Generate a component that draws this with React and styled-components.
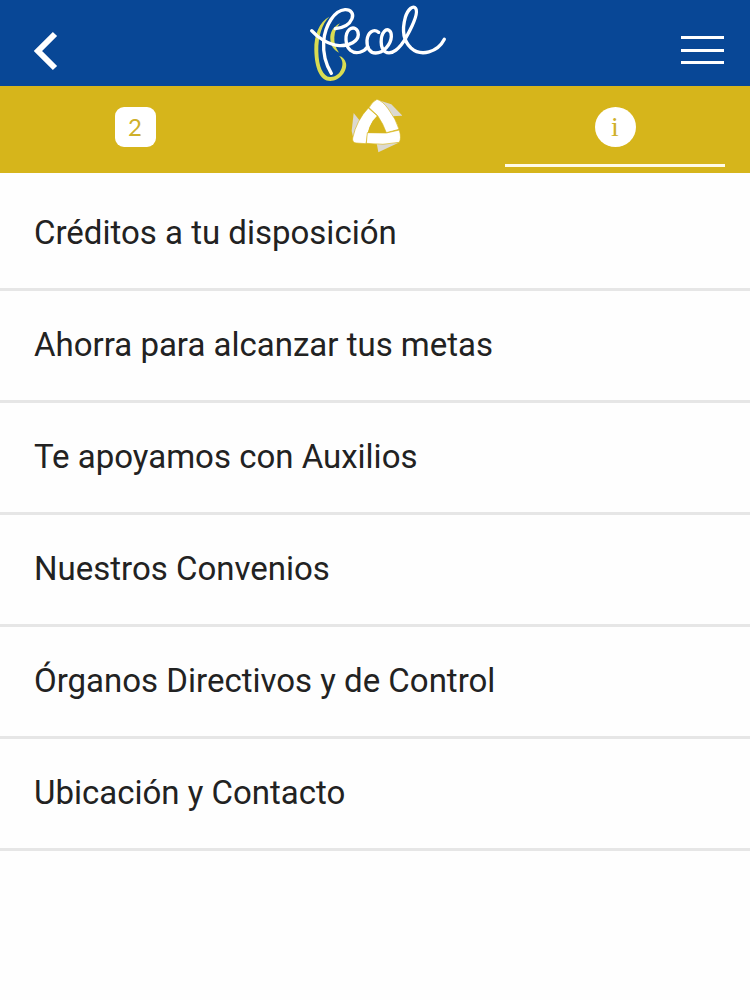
import React, { useState } from 'react';
import styled, { createGlobalStyle } from 'styled-components';

const GlobalStyle = createGlobalStyle`
  * {
    box-sizing: border-box;
  }

  body {
    margin: 0;
    background: #fefefe;
    font-family: Roboto, "Liberation Sans", sans-serif;
  }
`;

const Header = styled.header`
  display: grid;
  grid-template-columns: 1fr auto 1fr;
  align-items: center;
  height: 86px;
  padding: 0 24px;
  background: #084796;
`;

const IconButton = styled.button`
  display: flex;
  justify-self: ${({ $align }) => $align};
  padding: 14px 0 0;
  border: none;
  background: none;
  cursor: pointer;

  svg {
    display: block;
  }
`;

const LogoLink = styled.a`
  display: block;
  height: 86px;

  svg {
    display: block;
  }
`;

const Tabs = styled.nav`
  display: grid;
  grid-template-columns: repeat(3, 1fr);
  gap: 20px;
  height: 87px;
  padding: 0 25px 6px;
  background: #d6b51b;
`;

const Tab = styled.button`
  display: flex;
  align-items: center;
  justify-content: center;
  padding: 3px 0 0;
  border: none;
  border-bottom: 3px solid ${({ $active }) => ($active ? '#fffbe6' : 'transparent')};
  background: none;
  cursor: pointer;
`;

const Badge = styled.span`
  display: flex;
  align-items: center;
  justify-content: center;
  width: 41px;
  height: 40px;
  border-radius: ${({ $round }) => ($round ? '50%' : '9px')};
  background: #fff;
  color: #cfb02a;
  font-family: ${({ $round }) => ($round ? '"Liberation Serif", serif' : 'Lato, sans-serif')};
  font-size: ${({ $round }) => ($round ? '28px' : '24px')};
  font-weight: 400;
  line-height: 1;
`;

const OptionList = styled.ul`
  margin: 0;
  padding: 6px 0 0;
  list-style: none;
`;

const Option = styled.li`
  border-bottom: 3px solid #e6e6e6;
`;

const OptionLink = styled.a`
  display: flex;
  align-items: center;
  height: 109px;
  padding: 0 34px 2px;
  color: #222;
  font-size: 33px;
  line-height: 40px;
  text-decoration: none;
`;

const options = [
  { id: 'creditos', label: 'Créditos a tu disposición' },
  { id: 'ahorro', label: 'Ahorra para alcanzar tus metas' },
  { id: 'auxilios', label: 'Te apoyamos con Auxilios' },
  { id: 'convenios', label: 'Nuestros Convenios' },
  { id: 'organos', label: 'Órganos Directivos y de Control' },
  { id: 'contacto', label: 'Ubicación y Contacto' }
];

const BackIcon = () => (
  <svg width="42" height="42" viewBox="0 0 42 42" fill="none" stroke="#fff" strokeWidth="6">
    <path d="M31 5 L14 22 L31 39" />
  </svg>
);

const MenuIcon = () => (
  <svg width="46" height="34" viewBox="0 0 46 34" fill="#fff">
    <rect x="1" y="3" width="43" height="3" />
    <rect x="1" y="16" width="43" height="3" />
    <rect x="1" y="28" width="43" height="3" />
  </svg>
);

const Logo = () => (
  <svg width="160" height="86" viewBox="-15 0 480 258" fill="none" strokeLinecap="round" strokeLinejoin="round">
    <g fill="#d9dc52">
      <path d="M88 50 C58 66 42 104 43 150 C44 205 60 243 91 243 C120 243 143 212 138 190 C135 178 128 170 117 168 C127 178 130 190 125 205 C118 224 104 232 90 231 C68 229 56 198 55 155 C54 108 66 72 88 50 Z" />
      <path d="M120 70 C100 80 89 97 91 118 C92 136 100 150 117 158 C106 142 102 128 103 112 C104 94 110 80 120 70 Z" />
    </g>
    <g stroke="#fff" strokeWidth="10">
      <path d="M94 220 C78 194 69 156 71 124 C75 76 103 31 135 29 C153 28 162 42 156 56 C149 73 129 84 106 86" />
      <path d="M35 92 C52 112 86 135 118 137 C150 138 174 124 175 104 C175 86 160 79 149 88 C133 101 135 137 151 151 C168 165 193 156 203 140" />
      <path d="M236 97 C220 84 203 98 201 121 C200 144 209 159 227 159 C251 159 273 132 274 110 C275 91 262 84 253 94 C240 109 240 143 255 155 C275 168 301 144 319 111 C339 75 356 38 347 25 C340 15 324 26 316 52 C306 88 310 122 333 144 C363 171 413 157 433 118" />
    </g>
  </svg>
);

const TriangleIcon = () => (
  <svg width="54" height="56" viewBox="0 0 162 168">
    <g fill="#dcd9d0">
      <path d="M92 4 L130 16 L163 50 L130 52 Z" />
      <path d="M17 42 L36 66 L16 118 L11 96 Z" />
      <path d="M86 132 L155 130 L91 160 Z" />
    </g>
    <g fill="#fff" stroke="#d6b51b" strokeWidth="2">
      <path d="M63 26 Q74 6 87 1 Q104 6 121 30 Q144 60 153 91 L115 101 Q106 75 89 50 Z" />
      <path d="M61 27 L88 51 Q61 74 54 134 L24 132 Q12 130 14 117 Q26 63 61 27 Z" />
      <path d="M58 101 L115 102 L154 93 Q161 118 154 130 Q105 140 55 133 Z" />
    </g>
    <path fill="#d6b51b" d="M87 53 Q104 74 113 101 L60 101 Q68 70 87 53 Z" />
  </svg>
);

const App = () => {
  const [activeTab, setActiveTab] = useState('info');

  return (
    <>
      <GlobalStyle />
      <Header>
        <IconButton type="button" $align="start" aria-label="Volver">
          <BackIcon />
        </IconButton>
        <LogoLink href="#inicio" aria-label="Fecel">
          <Logo />
        </LogoLink>
        <IconButton type="button" $align="end" aria-label="Menú">
          <MenuIcon />
        </IconButton>
      </Header>

      <Tabs>
        <Tab
          type="button"
          $active={activeTab === 'avisos'}
          onClick={() => setActiveTab('avisos')}
        >
          <Badge>2</Badge>
        </Tab>
        <Tab
          type="button"
          aria-label="Servicios"
          $active={activeTab === 'servicios'}
          onClick={() => setActiveTab('servicios')}
        >
          <TriangleIcon />
        </Tab>
        <Tab
          type="button"
          $active={activeTab === 'info'}
          onClick={() => setActiveTab('info')}
        >
          <Badge $round>i</Badge>
        </Tab>
      </Tabs>

      <main>
        <OptionList>
          {options.map((option) => (
            <Option key={option.id}>
              <OptionLink href={`#${option.id}`}>{option.label}</OptionLink>
            </Option>
          ))}
        </OptionList>
      </main>
    </>
  );
};

export default App;
